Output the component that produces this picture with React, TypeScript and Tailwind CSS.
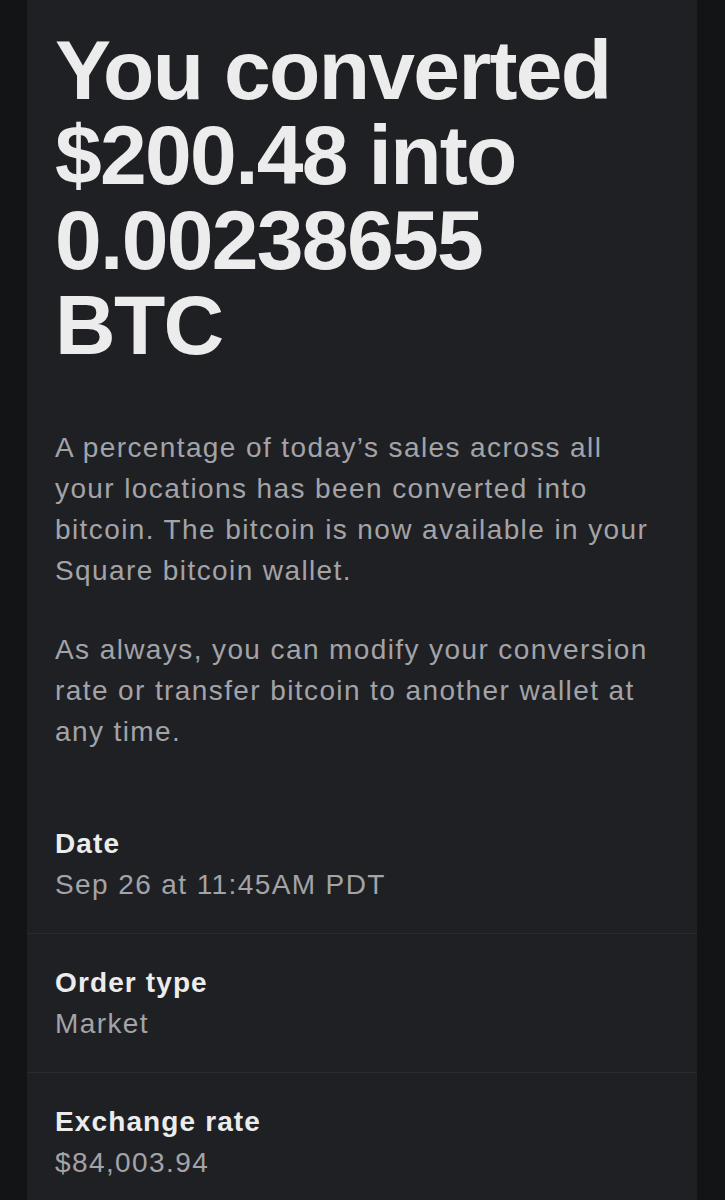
import React from "react";

const font = { fontFamily: '"Liberation Sans", Arial, Helvetica, sans-serif' };

function Row({ label, value, divider }: { label: string; value: string; divider?: boolean }) {
  return (
    <div className={divider ? "border-b border-[#2a2b2f]" : ""}>
      <div className="px-[28px] pt-[28px] pb-[28px]">
        <div className="text-[28px] leading-[41px] font-bold text-[#ececec] tracking-[0.04em]">{label}</div>
        <div className="text-[28px] leading-[41px] text-[#a3a3a8] tracking-[0.05em]">{value}</div>
      </div>
    </div>
  );
}

export default function App() {
  return (
    <div className="w-[725px] h-[1200px] bg-[#131415] flex justify-center overflow-hidden" style={font}>
      <div className="w-[670px] ml-[-1px] bg-[#1f2024] flex flex-col">
        <div className="px-[28px] pt-[28px]">
          <h1 className="text-[84px] leading-[85px] font-bold text-[#ececec] tracking-[-0.02em]">
            You converted $200.48 into 0.00238655 BTC
          </h1>
          <div className="mt-[59px] text-[28px] leading-[41px] text-[#a3a3a8] tracking-[0.05em]">
            <p>A percentage of today’s sales across all your locations has been converted into bitcoin. The bitcoin is now available in your Square bitcoin wallet.</p>
            <p className="mt-[38px]">As always, you can modify your conversion rate or transfer bitcoin to another wallet at any time.</p>
          </div>
        </div>
        <div className="mt-[43px]">
          <Row label="Date" value="Sep 26 at 11:45AM PDT" divider />
          <Row label="Order type" value="Market" divider />
          <Row label="Exchange rate" value="$84,003.94" />
        </div>
      </div>
    </div>
  );
}
